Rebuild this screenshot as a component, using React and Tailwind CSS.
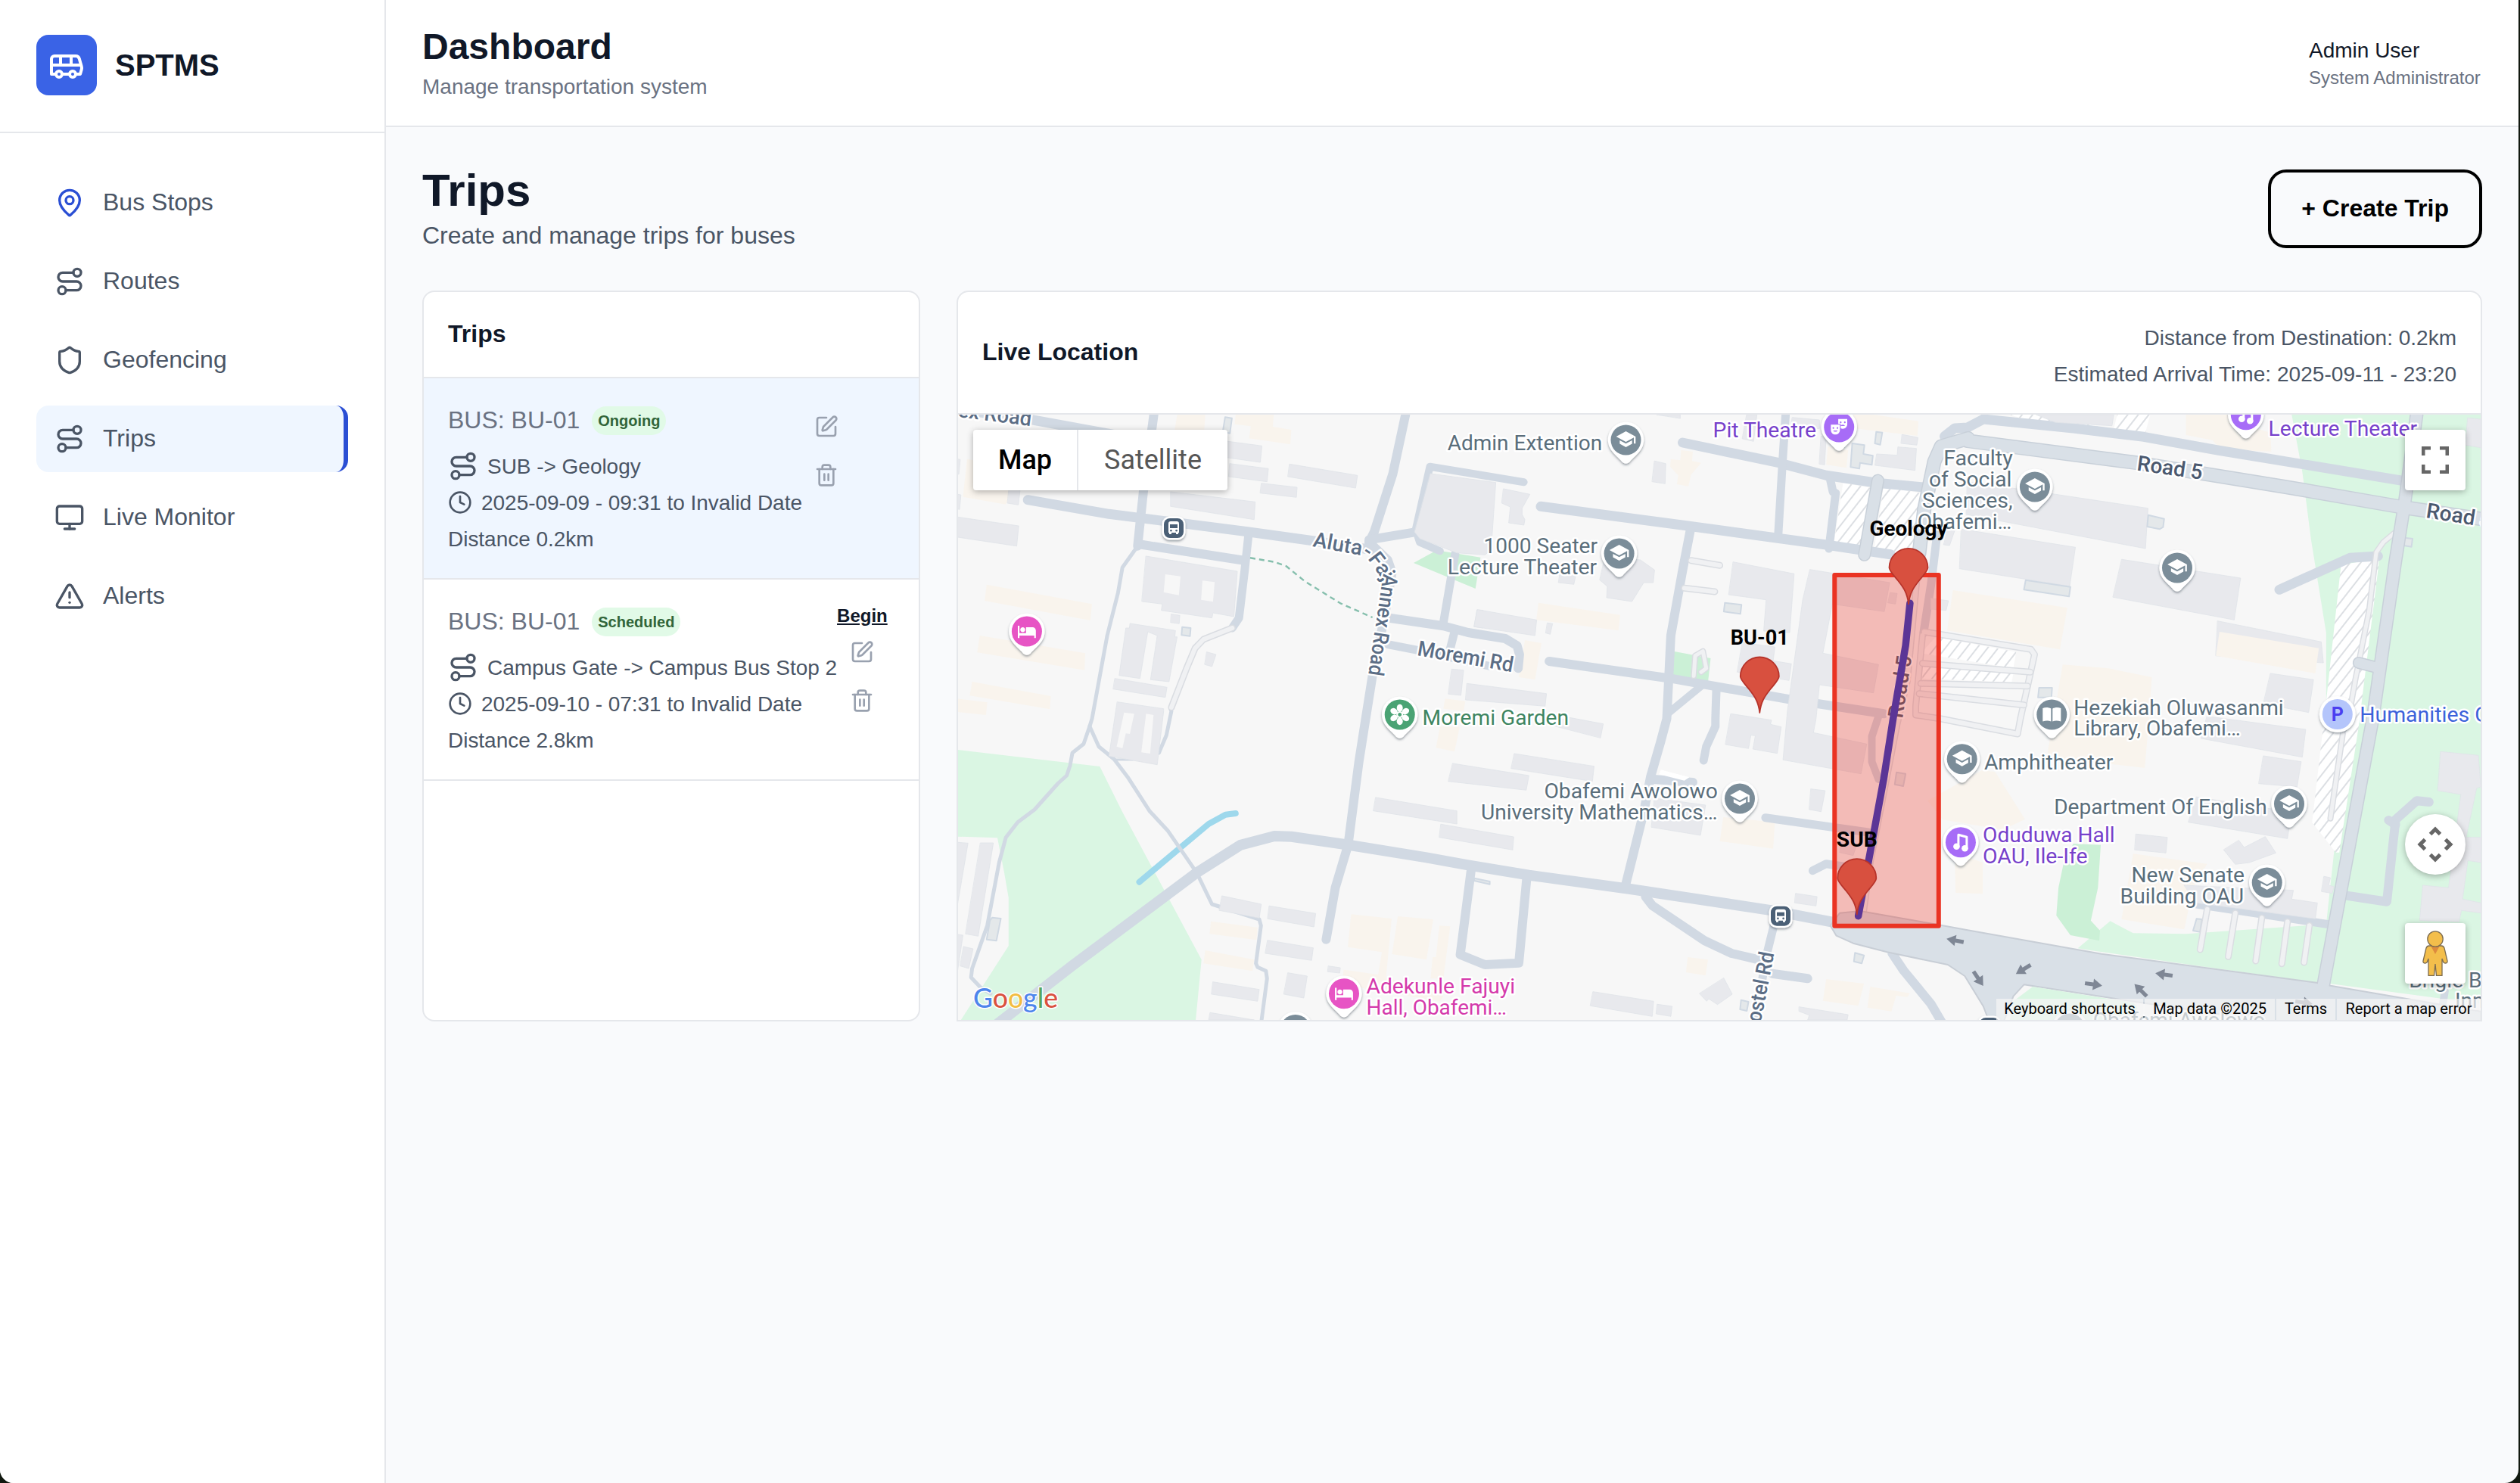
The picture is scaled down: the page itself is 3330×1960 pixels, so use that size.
import React from "react";
import { Bus, MapPin, Route, Shield, Monitor, TriangleAlert, Clock, SquarePen, Trash2 } from "lucide-react";
import { MdSchool, MdHotel, MdTheaterComedy } from "react-icons/md";

/* ---------- map geometry ---------- */

// The map sheet is digitised in six tiles; each has its own origin and scale.
const TILES = {
  A: [1260, 540, 2.24, 3],
  B: [1260, 940, 2.24, 3],
  C: [1940, 540, 2.24, 3],
  D: [1940, 940, 2.24, 3],
  E: [2600, 540, 2.148, 3],
  F: [2600, 940, 2.148, 3],
};

function trace(spec, close) {
  let t = TILES.A;
  const pts = spec.trim().split(/\s+/).map((tok) => {
    let s = tok;
    if (TILES[s[0]]) {
      t = TILES[s[0]];
      s = s.slice(1);
    }
    const [x, y] = s.split(",").map(Number);
    return (t[0] + x / t[2]).toFixed(1) + " " + (t[1] + y / t[3]).toFixed(1);
  });
  return "M" + pts.join("L") + (close ? "Z" : "");
}

const GREEN = [
  "B12,153 433,219 500,400 734,985 717,1224 22,1224 163,930 163,740 150,640 130,502 12,497",
  "E920,24 950,250 975,520 1018,890 1018,1150 F1040,560 1000,1075 1457,1160 E1457,24",
  "F313,940 405,832 470,880 620,883 960,850 1030,855 1000,1078 680,1015 360,950",
];
const GREEN_LOW = ["F130,1150 185,1092 470,1155 480,1170 490,1224 120,1224"];
const GREEN_DARK = [
  "F300,525 378,530 370,700 350,830 376,870 374,910 292,888 252,810 258,700 273,600",
  "A1362,612 1430,562 1560,590 1545,714",
  "C608,962 718,990 710,1085 600,1055",
];
const BEIGE = [
  "A662,24 745,24 742,84 655,84",
  "A835,24 948,24 945,72 1000,84 997,142 875,118 880,70 832,62",
  "A98,698 410,775 405,840 92,762",
  "A78,900 390,970 388,1037 70,967",
  "A55,1083 288,1140 285,1192 48,1138",
  "A12,1150 100,1165 96,1215 12,1203",
  "A40,200 200,240 155,380 28,350",
  "A1455,1150 1515,1160 1510,1200 1450,1190",
  "B1177,805 1297,822 1280,1060 1255,1060 1268,955 1167,935",
  "B1315,813 1420,825 1400,985 1298,963",
  "B1438,850 1470,853 1450,1060 1412,1060 1418,975 1428,975",
  "B762,833 900,857 897,907 758,883",
  "B745,948 890,985 885,1030 740,1000",
  "B1440,60 1498,62 1483,160 1428,145",
  "B1155,1025 1260,1045 1450,1130 1440,1150 1220,1100 1150,1080",
  "C630,165 665,170 663,208 690,215 660,262 652,308 618,300 622,265 598,230 600,200 628,205",
  "C208,770 450,818 445,880 202,838",
  "C168,918 217,930 198,1075 150,1065",
  "C1435,720 E283,790 262,955 C1418,880",
  "C1065,150 1125,165 1120,235 1060,222",
  "C1140,24 1200,24 1333,50 1330,108 1140,78",
  "D755,420 908,440 903,545 745,515",
  "D650,975 710,985 703,1048 645,1035",
  "D1060,1062 1172,1080 1155,1168 1050,1148",
  "D1190,1092 1307,1118 1300,1133 1267,1128 1253,1190 1182,1175",
  "D1360,355 1520,235 F78,240 163,428 100,470 D1405,430",
  "D1440,560 F43,600 43,724 D1443,720",
  "E270,1015 400,1030 523,1065 515,1230 F503,225 225,180 240,60",
  "E620,24 760,24 770,60 860,95 862,170 760,165 720,162 695,125 620,105",
  "F470,565 680,605 640,700 615,865 437,825",
];
const BUILDINGS = [
  "A643,330 893,370 890,440 643,388",
  "A812,130 913,148 908,213 812,195",
  "A818,218 932,238 928,290 815,270",
  "A912,296 1017,312 1015,352 908,335",
  "A995,220 1196,265 1190,315 990,270",
  "A12,430 193,465 187,545 12,510",
  "A165,310 197,325 192,382 160,375",
  "A12,200 20,202 16,260 12,260",
  "A12,340 22,342 18,400 12,398",
  "A570,585 840,645 830,825 768,810 765,830 615,800 618,775 558,765",
  "A523,852 657,880 655,905 662,905 638,1083 583,1075 603,900 575,885 552,1070 490,1058 510,870 520,870",
  "A478,1070 632,1105 627,1145 473,1112",
  "A485,1163 622,1190 B622,0 603,212 460,178 480,0",
  "A750,965 777,975 765,1023 744,1015",
  "A645,815 670,820 668,853 643,848",
  "A1412,258 C82,293 68,560 50,580 A1490,572 1380,515 1365,490",
  "A1475,1033 1510,1037 1502,1137 1465,1132",
  "A1520,1090 C232,1130 228,1180 A1516,1155",
  "A1550,798 1568,800 1568,870 1542,865",
  "B1250,342 1490,395 1490,447 1243,395",
  "B1443,448 D135,498 132,550 B1438,500",
  "B1478,207 D180,255 172,313 B1465,278",
  "B795,732 911,765 905,820 787,790",
  "B935,772 1072,802 1067,855 930,823",
  "B930,908 1065,938 1060,988 923,960",
  "B768,1073 905,1103 900,1150 764,1122",
  "B760,1195 890,1224 756,1224",
  "B990,1037 1047,1050 1037,1137 978,1122",
  "B1110,1010 1145,1017 1143,1038 1108,1033",
  "B12,520 43,523 12,765",
  "B80,522 118,522 73,892 36,883",
  "B12,885 28,888 12,1030",
  "B30,933 58,942 45,1020 20,1010",
  "C105,318 183,340 160,395 160,420 168,440 165,462 120,453 125,390 100,375",
  "C552,208 585,218 583,298 545,290",
  "C785,608 965,655 952,888 875,882 882,758 772,738",
  "C1012,638 1248,690 1232,805 1078,775 1050,970 1215,1015 1200,1127 1040,1095 1030,1230 D1022,85 1180,130 1163,248 932,193 945,0 C990,760",
  "C405,590 510,600 552,640 548,690 520,690 485,765 410,750 412,705 390,680",
  "C28,797 203,838 198,900 18,865",
  "C235,850 250,853 243,895 230,890",
  "C272,655 318,665 313,697 268,690",
  "C812,928 908,945 903,1000 957,1012 950,1078 797,1045",
  "C1210,180 1270,185 1272,152 1327,158 1323,245 1205,225",
  "C1285,103 1332,115 1328,145 1282,138",
  "C1045,110 1060,112 1055,223 1040,220",
  "C960,35 1040,45 1040,80 955,70",
  "C825,24 855,24 845,130 812,120",
  "C558,24 628,24 628,38",
  "C1420,480 1440,485 1425,543 1408,540",
  "C1460,478 E306,550 290,704 C1455,635",
  "C1478,290 E250,340 512,395 505,555 C1475,420",
  "C1370,752 1422,762 1415,800 1370,795",
  "C1250,730 1270,733 1265,775 1243,770",
  "D232,50 300,25 400,50 392,105",
  "D137,168 373,218 368,278 128,227",
  "D552,345 703,372 688,492 543,460",
  "D778,10 898,35 895,52 927,62 915,167 843,150 850,97 837,95 830,148 762,132",
  "D1015,308 1057,315 1045,398 1010,390",
  "D970,722 1033,735 1030,772 967,760",
  "D370,1112 549,1150 545,1210 362,1168",
  "D560,1162 604,1170 600,1210 557,1200",
  "D757,1058 782,1122 738,1163 712,1140 706,1150 685,1120",
  "D980,1172 1125,1203 1122,1224 1005,1224 1010,1205 980,1190",
  "D1105,520 1150,530 1140,572 1100,560",
  "E438,598 775,672 757,838 413,748",
  "E710,842 1004,925 1010,1008 705,980",
  "E860,1050 982,1075 968,1205 840,1170",
  "E1420,37 1457,42 1457,155 1413,145",
  "E195,24 415,24 410,68 250,55",
  "F680,20 960,72 950,182 663,108",
  "F840,177 947,200 935,300 827,287",
  "F650,340 920,400 908,505 627,440",
  "F478,487 567,500 563,562 475,550",
  "F770,512 785,540 845,497 875,562 800,600 760,607 727,550",
  "F615,690 925,710 920,745 993,760 987,823 650,760",
  "F1012,655 1030,660 1025,690 1040,695 1035,722 1005,715",
  "F1343,160 1450,175 1457,300 1445,305 1415,500 1457,500 1457,600 1420,592 1405,745 1457,760 1457,800 1402,790 1395,835 1283,830 1292,690 1365,700 1400,330 1335,315",
];
const COURTYARDS = [
  "A627,657 672,665 667,740 622,728",
  "A737,682 773,688 768,766 733,758",
  "B505,5 535,10 522,90 510,88 500,147 483,140",
  "B570,10 592,15 582,168 556,163",
];
const OUTLINED = [
  "A677,866 702,870 700,902 675,898",
  "A804,34 824,38 818,98 797,92",
  "B115,818 140,822 127,910 98,905 108,830",
  "C1208,92 1226,95 1220,143 1204,138",
  "C1137,138 1173,145 1170,180 1198,187 1195,223 1160,215 1158,238 1132,232",
  "C760,770 809,778 806,814 757,805",
  "D808,1145 830,1152 825,1188 805,1182",
  "D1145,958 1172,968 1165,1000 1142,992",
  "D1268,242 1295,248 1288,297 1263,290",
  "D18,662 64,675 64,686 18,672",
  "E513,422 558,437 555,470 545,478 510,468",
  "E165,680 292,707 288,745 160,718",
  "E203,1107 240,1107 238,1145 200,1145",
  "E1240,512 1263,516 1260,548 1236,542",
  "F650,823 665,825 660,875 640,870",
];
const PARKING = [
  "C1110,295 1195,315 1160,560 1082,543",
  "C1230,310 1340,335 1320,585 1200,575",
  "E1060,620 1140,600 1170,560 1165,640 F1110,60 1055,560 1045,560 978,440 E1018,1160",
  "C1385,905 E138,965 130,1030 C1340,970",
  "C1345,1010 E130,1050 125,1085 C1345,1070",
  "E425,24 518,24 505,95 415,80",
  "E120,24 250,24 380,75 200,60",
];
const ROADS = [
  ["A593,24 562,330 545,545", 12],
  ["A0,0 235,45 480,105", 13],
  ["A220,362 460,418 870,488 1068,525 1240,560", 13],
  ["A1338,24 1300,260 1245,490 1230,530", 12],
  ["A1230,530 1285,600 1298,650 1275,830 1240,1060 1220,1230 B1200,200 1168,530 1130,700 1103,905", 12],
  ["A1230,520 1365,490", 12],
  ["A550,538 860,602", 12],
  ["A874,490 862,640 845,830 825,870", 11],
  ["A545,545 500,630 487,730 455,900 410,1230 B403,60 385,130 352,165 345,215 335,255 310,285 240,390 190,440 155,500 135,600 100,850 55,1020 52,1055 80,1095 110,1120", 5],
  ["B403,60 430,140 475,190 515,260 580,395 635,475 720,640 765,765 905,825 910,850 895,1000 900,1015 925,1030 928,1060 912,1224", 5],
  ["A642,1190 B645,0 630,95 608,165", 5],
  ["B475,192 530,192", 3],
  ["B130,1240 350,1010 720,640 850,530 950,495 1000,497 1170,530 1400,580 D0,610 180,650 480,705 900,790 1075,835", 14],
  ["B1533,620 1500,965 D50,1005 150,998 174,655", 12],
  ["A1440,565 1380,530 1368,480 1410,230 C0,255 165,292", 10],
  ["A1485,575 1450,850", 11],
  ["A1290,830 1450,862 C0,888 110,912 145,940 152,975 148,1030", 12],
  ["A1482,890 1465,980", 11],
  ["A1285,935 1400,965 C60,1020", 11],
  ["C635,135 920,215 1060,265 1210,295 1350,312", 13],
  ["C940,24 930,225 918,500", 11],
  ["C1070,270 1080,330 1088,335 1068,555", 11],
  ["C215,388 650,465 1060,540 1250,578", 13],
  ["C658,480 635,640 600,900 588,1230 D570,120 540,260 520,400 465,695", 12],
  ["C240,1002 600,1070 960,1155 1230,1210", 12],
  ["C690,1100 590,1210", 10],
  ["C735,1110 732,1230 D732,60 705,140 697,195", 11],
  ["C1390,480 1370,700 1348,890", 11],
  ["C1410,110 1440,78 E0,75 45,42 300,78 500,112 710,165 1230,285", 13],
  ["D525,735 545,770 700,910 780,960 860,985", 12],
  ["D905,850 880,985 850,1240", 11],
  ["D900,1040 1005,1060", 12],
  ["D880,422 1185,480", 11],
  ["D1020,632 1060,605 1110,615", 11],
  ["D1215,20 1195,100 1195,200 1215,270", 10],
  ["D550,270 665,282", 12],
  ["D1255,960 1290,1030 1370,1160 1405,1240", 12],
  ["E885,718 1085,592 1165,585", 13],
  ["F1310,360 1275,355 1215,430 1190,755 1070,730", 12],
  ["F1195,432 1215,450", 12],
  ["F650,765 1025,845", 11],
  ["F1355,1110 1340,1240", 10],
];
const AVENUES = [
  ["C1335,575 1350,400 1380,210 1400,150 1480,118 E0,128 480,215 900,310 1230,390 1470,440", 17],
  ["C1213,285 1173,580", 15],
  ["E1275,20 1240,380 1215,600 1150,1230 F1010,1085", 16],
  ["E1110,1008 1170,1030", 14],
];
const AVENUE_AREA =
  "D1072,850 1100,800 1160,792 1390,846 F0,868 380,962 990,1076 1030,1088 1457,1190 1457,1240 900,1240 430,1142 160,1084 130,1130 100,1240 D1545,1240 1525,1170 1470,1050 1420,1005 1240,955 1140,920 1090,890";
const LANES = [
  ["A825,870 740,915 715,950 690,1030 645,1185", 9],
  ["C660,602 745,622", 9],
  ["C640,712 730,726", 9],
  ["C668,1060 672,980 695,962 705,1030 690,1045", 8],
  ["C1330,650 1300,1080 D1270,50 1190,600 1170,800", 9],
  ["C1350,885 E180,955 190,975 150,1230 F142,90 D1400,30 1325,15 C1325,1180 1345,900", 9],
  ["C1345,1010 E178,1045", 9],
  ["C1340,1090 E170,1100", 9],
  ["C1335,1130 E160,1175", 9],
  ["E1210,495 1180,530 1160,570 1140,800 1100,1080 1085,1200", 8],
  ["F1065,90 1030,425", 8],
  ["F680,785 660,945", 9],
  ["F760,800 740,973", 9],
  ["F835,820 818,990", 9],
  ["F908,835 892,1001", 9],
  ["F970,850 955,996", 9],
];

const ARROWS = [
  [2584, 1243, 191],
  [2614, 1293, 56],
  [2674, 1281, 148],
  [2766, 1301, 8],
  [2829, 1309, 225],
  [2860, 1288, 188],
  [3044, 1325, 8],
];

function Arrow({ x, y, a }) {
  return (
    <path
      d="M-11 -2.6H0V-7.5L12 0L0 7.5V2.6H-11Z"
      fill="#7f8795"
      transform={`translate(${x} ${y}) rotate(${a})`}
    />
  );
}

/* ---------- map symbols ---------- */

const PIN_COLORS = { school: "#7b8d99", book: "#7b8d99", bed: "#e754c4", mask: "#a76cf7", music: "#a76cf7", flower: "#4aa374" };

function PinGlyph({ kind }) {
  if (kind === "school") return <MdSchool x={-14} y={-15} size={28} color="#fff" />;
  if (kind === "bed") return <MdHotel x={-13} y={-13} size={26} color="#fff" />;
  if (kind === "mask") return <MdTheaterComedy x={-13} y={-14} size={26} color="#fff" />;
  if (kind === "book")
    return (
      <g fill="#fff">
        <path d="M-12 -8.5C-8 -10 -4 -9.5 -1 -8V9C-4 7.5 -8 7.5 -12 9Z" />
        <path d="M12 -8.5C8 -10 4 -9.5 1 -8V9C4 7.5 8 7.5 12 9Z" />
      </g>
    );
  if (kind === "music")
    return (
      <g>
        <path d="M-3 6V-10L8 -7V8" fill="none" stroke="#fff" strokeWidth="3" />
        <circle cx="-5.5" cy="5.5" r="4.3" fill="#fff" />
        <circle cx="5.5" cy="8" r="4.3" fill="#fff" />
      </g>
    );
  return (
    <g>
      {[0, 60, 120, 180, 240, 300].map((r) => (
        <ellipse key={r} cx="0" cy="-8.800" rx="4" ry="5" fill="#fff" transform={`rotate(${r})`} />
      ))}
      <circle r="4.500" fill="#fff" />
      <circle r="2.400" fill="#4aa374" />
    </g>
  );
}

function PoiPin({ x, y, kind }) {
  return (
    <g transform={`translate(${x} ${y})`}>
      <path
        d="M0 -23.8A23.6 23.6 0 0 1 19.8 12.8C15 20 9.5 23.5 4.8 29.2Q0 33.5 -4.8 29.2C-9.5 23.5 -15 20 -19.8 12.8A23.6 23.6 0 0 1 0 -23.8Z"
        fill="#fff"
        filter="url(#pinShadow)"
      />
      <circle r="20" fill={PIN_COLORS[kind]} />
      <PinGlyph kind={kind} />
    </g>
  );
}

const PINS = [
  [2148.5, 581, "school"],
  [2139.6, 731, "school"],
  [2430.2, 564, "mask"],
  [2688.9, 643, "school"],
  [2877, 750, "school"],
  [2967.8, 547.7, "music"],
  [2711.3, 944, "book"],
  [2592.7, 1002.7, "school"],
  [3025, 1062, "school"],
  [2995.7, 1166, "school"],
  [2590.9, 1112.7, "music"],
  [2299, 1055, "school"],
  [1356.9, 834, "bed"],
  [1776, 1312.7, "bed"],
  [1849.7, 944, "flower"],
  [1711.8, 1360.5, "school"],
  [2735, 1359, "school"],
];

function TransitStop({ x, y }) {
  return (
    <g transform={`translate(${x} ${y})`}>
      <rect x="-15.5" y="-15.5" width="31" height="31" rx="10" fill="#fff" filter="url(#pinShadow)" />
      <rect x="-13" y="-13" width="26" height="26" rx="8" fill="#4b6076" />
      <path d="M-7 -6Q-7 -9 -4 -9H4Q7 -9 7 -6V6H6V8H3V6H-3V8H-6V6H-7Z" fill="#fff" />
      <rect x="-5" y="-5" width="10" height="5" fill="#4b6076" />
      <circle cx="-3.6" cy="3.2" r="1.3" fill="#4b6076" />
      <circle cx="3.6" cy="3.2" r="1.3" fill="#4b6076" />
    </g>
  );
}

// [text, x, baseline, rendered width, colour]
const SLATE = "#5a6e7b";
const VIOLET = "#7741cb";
const LABELS = [
  ["Admin Extention", 1914.5, 594.3, 202, SLATE],
  ["1000 Seater", 1962.3, 730.3, 148, SLATE],
  ["Lecture Theater", 1914.5, 758.3, 195, SLATE],
  ["Pit Theatre", 2265.4, 577.7, 134, VIOLET],
  ["Faculty", 2570, 614.3, 89, SLATE],
  ["of Social", 2550.7, 642.3, 107, SLATE],
  ["Sciences,", 2541.8, 670.3, 117, SLATE],
  ["Obafemi…", 2535.5, 698.3, 122, SLATE],
  ["Lecture Theater", 2999.4, 575.7, 194, VIOLET],
  ["Hezekiah Oluwasanmi", 2742, 944.3, 275, SLATE],
  ["Library, Obafemi…", 2742, 972, 218, SLATE],
  ["Humanities C", 3120, 953.3, 168, "#3c62da"],
  ["Amphitheater", 2623.7, 1017, 168, SLATE],
  ["Department Of English", 2716, 1075.7, 279, SLATE],
  ["Oduduwa Hall", 2621.9, 1112.7, 172, VIOLET],
  ["OAU, Ile-Ife", 2621.9, 1140.7, 136, VIOLET],
  ["New Senate", 2818.3, 1165.7, 147, SLATE],
  ["Building OAU", 2803.4, 1194, 161, SLATE],
  ["Moremi Garden", 1881.4, 957.3, 191, "#3e8561"],
  ["Obafemi Awolowo", 2042.2, 1055, 227, SLATE],
  ["University Mathematics…", 1958.8, 1083, 310, SLATE],
  ["Adekunle Fajuyi", 1807.3, 1312.3, 194, "#d43aab"],
  ["Hall, Obafemi…", 1807.3, 1340.3, 183, "#d43aab"],
  ["Brigle B", 3185, 1304.7, 94, SLATE],
  ["Inn", 3245.7, 1331.7, 36, SLATE],
  ["Obafemi Awolowo", 2767.6, 1358, 225, SLATE],
];

// [text, x, baseline, rotation, width, anchor, colour]
const ROAD_LABELS = [
  ["nnex Road", 1362, 563, 7, 128, "end", "#5b6d85"],
  ["Moremi Rd", 1872, 866, 10, 128, "start", "#5b6d85"],
  ["Road 5", 2823, 621.5, 8, 87, "start", "#4b596f"],
  ["Road 5", 3205, 684, 9, 88, "start", "#4b596f"],
  ["Road 5", 2514, 950, -81.5, 83, "start", "#4b596f"],
  ["Hostel Rd", 2344.5, 1260, -79, 112, "end", "#5b6d85"],
];

function Marker({ x, y, label, w }) {
  return (
    <g transform={`translate(${x} ${y})`}>
      <path
        d="M0 0C-1.5 -14 -6 -21 -14 -31C-21 -39.500 -25.500 -44 -25.500 -48A25.500 25.500 0 0 1 25.500 -48C25.500 -44 21 -39.500 14 -31C6 -21 1.500 -14 0 0Z"
        fill="#d8503f"
        stroke="#b7342b"
        strokeWidth="1.8"
        strokeLinejoin="round"
      />
      <text y="-90" textAnchor="middle" fontSize="28" fontWeight="700" fill="#000" textLength={w} lengthAdjust="spacingAndGlyphs">
        {label}
      </text>
    </g>
  );
}

function MapCanvas() {
  return (
    <svg
      viewBox="1266 548 2012 800"
      className="block h-[800px] w-[2012px] font-['Roboto',sans-serif]"
      strokeLinejoin="round"
      strokeLinecap="round"
      aria-hidden="true"
    >
      <defs>
        <pattern id="hatch" width="11" height="11" patternUnits="userSpaceOnUse" patternTransform="rotate(38)">
          <rect width="11" height="11" fill="#fff" />
          <rect width="2" height="11" fill="#dcdfe3" />
        </pattern>
        <filter id="pinShadow" x="-30%" y="-30%" width="160%" height="170%">
          <feDropShadow dx="0" dy="2" stdDeviation="1.6" floodColor="#3b4a55" floodOpacity="0.5" />
        </filter>
      </defs>
      <rect x="1266" y="548" width="2012" height="800" fill="#f7f7f7" />
      {GREEN.map((d) => <path key={d} d={trace(d, true)} fill="#daf6e3" />)}
      {GREEN_DARK.map((d) => <path key={d} d={trace(d, true)} fill="#cbf0d6" />)}
      <path d={trace("B550,677 755,447 805,410 835,405")} fill="none" stroke="#9ed8ec" strokeWidth="8" />
      {BEIGE.map((d) => <path key={d} d={trace(d, true)} fill="#f9f4ed" />)}
      {PARKING.map((d) => <path key={d} d={trace(d, true)} fill="url(#hatch)" />)}
      {ROADS.map(([d, w]) => <path key={d} d={trace(d)} fill="none" stroke="#d1d9e3" strokeWidth={w} />)}
      {BUILDINGS.map((d) => <path key={d} d={trace(d, true)} fill="#e8e9ed" stroke="#e0e3e9" strokeWidth="0.8" />)}
      <path d={trace("E715,885 997,950 987,1050 705,980", true)} fill="#f9f4ed" />
      {COURTYARDS.map((d) => <path key={d} d={trace(d, true)} fill="#f7f7f7" />)}
      {OUTLINED.map((d) => <path key={d} d={trace(d, true)} fill="#e4e8ea" stroke="#d0d9e3" strokeWidth="2" />)}
      <path d={trace("D570,232 655,262 640,275 565,250", true)} fill="#fff" />
      {LANES.map(([d, w]) => (
        <g key={d} fill="none">
          <path d={trace(d)} stroke="#dadde2" strokeWidth={w} />
          <path d={trace(d)} stroke="#f0f1f3" strokeWidth={w - 3} />
        </g>
      ))}
      {AVENUES.map(([d, w]) => <path key={d} d={trace(d)} fill="none" stroke="#c8d0d9" strokeWidth={w + 2} />)}
      <path d={trace(AVENUE_AREA, true)} fill="#d9e0e7" stroke="#c8ced6" strokeWidth="2" />
      {AVENUES.map(([d, w]) => <path key={d} d={trace(d)} fill="none" stroke="#d9e0e7" strokeWidth={w - 1} />)}
      {GREEN_LOW.map((d) => <path key={d} d={trace(d, true)} fill="#daf6e3" />)}
      <path
        d={trace("A878,592 950,608 985,625 1040,685 1145,772 1240,828")}
        fill="none"
        stroke="#86bfad"
        strokeWidth="2.4"
        strokeDasharray="7 5"
        strokeLinecap="butt"
      />
      {ARROWS.map(([x, y, a]) => <Arrow key={x} x={x} y={y} a={a} />)}

      <g fontSize="28" fontWeight="500" stroke="#fff" strokeWidth="5" paintOrder="stroke">
        {ROAD_LABELS.map(([t, x, y, a, w, anchor, c]) => (
          <text
            key={t + x}
            transform={`translate(${x} ${y}) rotate(${a})`}
            textAnchor={anchor}
            textLength={w}
            lengthAdjust="spacingAndGlyphs"
            fill={c}
          >
            {t}
          </text>
        ))}
        <path id="alutaCurve" d="M1734 722L1799 734Q1806 737 1812 745L1840 785" fill="none" stroke="none" />
        <text fill="#5b6d85">
          <textPath href="#alutaCurve">Aluta-Faj</textPath>
        </text>
        <text transform="translate(1828 758) rotate(98.500)" fill="#5b6d85" textLength="135" lengthAdjust="spacingAndGlyphs">
          Annex Road
        </text>
      </g>

      {PINS.map(([x, y, k]) => <PoiPin key={x} x={x} y={y + 0.5} kind={k} />)}
      <g transform="translate(3088.800 944)">
        <circle r="24" fill="#fff" filter="url(#pinShadow)" />
        <circle r="20" fill="#b4c5fb" />
        <text textAnchor="middle" y="9" fontSize="25" fontWeight="700" fill="#4b3ff0">P</text>
      </g>
      <TransitStop x={1551} y={698} />
      <TransitStop x={2353} y={1210.7} />
      <TransitStop x={2629} y={1358} />

      <g fontSize="28" stroke="#fff" strokeWidth="5" paintOrder="stroke">
        {LABELS.map(([t, x, y, w, c]) => (
          <text key={t + y} x={x - 1.8} y={y + 0.4} fill={c} textLength={w + 2.5} lengthAdjust="spacingAndGlyphs">
            {t}
          </text>
        ))}
      </g>

      <rect x="2424.300" y="760" width="137.500" height="463.700" fill="#ea3323" fillOpacity="0.3" stroke="#ea3323" strokeWidth="6" />
      <path
        d={trace("C1308,772 1295,940 1258,1230 D1230,270 1190,560 1155,812")}
        fill="none"
        stroke="#5b3596"
        strokeWidth="9.500"
      />
      <Marker x={2522} y={798.3} label="Geology" w={103} />
      <Marker x={2325.3} y={942} label="BU-01" w={77} />
      <Marker x={2453.800} y={1208.700} label="SUB" w={54} />

      <g fontSize="37" fontWeight="500" stroke="#fff" strokeWidth="3" paintOrder="stroke">
        <text x="1286" y="1332" textLength="112" lengthAdjust="spacingAndGlyphs" className="font-['Lato',sans-serif]">
          <tspan fill="#4e86ec">G</tspan>
          <tspan fill="#d9523f">o</tspan>
          <tspan fill="#f2bd42">o</tspan>
          <tspan fill="#4e86ec">g</tspan>
          <tspan fill="#58a65c">l</tspan>
          <tspan fill="#d9523f">e</tspan>
        </text>
      </g>
    </svg>
  );
}

/* ---------- map controls ---------- */

function MapTypeControl() {
  return (
    <div className="absolute left-5 top-5 flex h-20 rounded-sm bg-white font-['Roboto',sans-serif] text-4xl leading-[81px] shadow-[0_2px_8px_rgba(0,0,0,0.3)]">
      <button className="w-[139px] border-r-2 border-gray-200 font-medium text-black">Map</button>
      <button className="w-[197px] text-[#565656]">Satellite</button>
    </div>
  );
}

function SideControls() {
  const box = "absolute right-5 flex h-20 w-20 items-center justify-center bg-white shadow-[0_2px_8px_rgba(0,0,0,0.3)]";
  return (
    <>
      <button className={`${box} top-5 rounded-sm`} aria-label="Toggle fullscreen view">
        <svg viewBox="0 0 36 36" className="h-9 w-9" fill="none" stroke="#666" strokeWidth="4.500">
          <path d="M2.250 12V2.250H12M24 2.250H33.750V12M33.750 24V33.750H24M12 33.750H2.250V24" />
        </svg>
      </button>
      <button className={`${box} top-[528px] rounded-full`} aria-label="Map camera controls">
        <svg viewBox="-24 -24 48 48" className="h-12 w-12" fill="none" stroke="#666" strokeWidth="5">
          {[0, 90, 180, 270].map((r) => (
            <path key={r} d="M-6.500 -13.500L0 -20L6.500 -13.500" transform={`rotate(${r})`} />
          ))}
        </svg>
      </button>
      <button className={`${box} top-[672px] rounded-sm`} aria-label="Street View Pegman">
        <svg viewBox="0 0 34 60" className="h-[60px] w-[34px]" stroke="#7c6c50" strokeWidth="1.300">
          <path
            d="M9 20H25Q28 20 29 23L33 40Q33.500 43 30 43L28 42L26 37V59.300H18.500L17 44L15.500 59.300H8V37L6 42L4 43Q.5 43 1 40L5 23Q6 20 9 20Z"
            fill="#f3be4b"
          />
          <path d="M11 20H23L17 31Z" fill="#dd8b3e" stroke="none" />
          <circle cx="17" cy="11" r="10.200" fill="#f3be4b" />
        </svg>
      </button>
    </>
  );
}

function Attribution() {
  const cell = "bg-[#f5f5f5]/70 text-center";
  return (
    <div className="absolute bottom-0 right-0 flex h-7 gap-0.5 whitespace-nowrap font-['Roboto',sans-serif] text-xl leading-[27px] text-black">
      <span className={`${cell} w-[194px]`}>Keyboard shortcuts</span>
      <span className={`${cell} w-[172px]`}>Map data ©2025</span>
      <span className={`${cell} w-[78px]`}>Terms</span>
      <span className={`${cell} w-[190px]`}>Report a map error</span>
    </div>
  );
}

/* ---------- application shell ---------- */

const NAV = [
  { label: "Bus Stops", Icon: MapPin, tint: "text-[#2b4fd4]" },
  { label: "Routes", Icon: Route },
  { label: "Geofencing", Icon: Shield },
  { label: "Trips", Icon: Route, active: true },
  { label: "Live Monitor", Icon: Monitor },
  { label: "Alerts", Icon: TriangleAlert },
];

function Sidebar() {
  return (
    <aside className="w-[510px] shrink-0 border-r-2 border-gray-200 bg-white">
      <div className="flex h-44 items-center gap-6 border-b-2 border-gray-200 px-12 pb-0.5">
        <div className="flex h-20 w-20 items-center justify-center rounded-2xl bg-[#3a63e6]">
          <Bus size={48} color="#fff" />
        </div>
        <span className="text-[40px] font-bold leading-[56px] text-gray-900">SPTMS</span>
      </div>
      <nav className="flex flex-col gap-4 p-12">
        {NAV.map(({ label, Icon, tint, active }) => (
          <a
            key={label}
            className={
              "flex h-[88px] items-center gap-6 rounded-2xl px-6 text-[32px] text-gray-600 " +
              (active ? "border-r-[6px] border-[#2b4fd4] bg-[#eff6ff]" : "")
            }
          >
            <Icon size={40} className={tint} />
            <span className="pb-0.5">{label}</span>
          </a>
        ))}
      </nav>
    </aside>
  );
}

function TopBar() {
  return (
    <header className="flex h-[168px] items-center justify-between border-b-2 border-gray-200 bg-white px-12">
      <div>
        <h2 className="text-5xl font-bold leading-[62px] pb-0.5 text-gray-900">Dashboard</h2>
        <p className="text-[28px] leading-10 text-gray-500">Manage transportation system</p>
      </div>
      <div className="w-[229px] whitespace-nowrap">
        <p className="text-[28px] leading-10 text-gray-900">Admin User</p>
        <p className="text-2xl leading-8 text-gray-500">System Administrator</p>
      </div>
    </header>
  );
}

function TripRow({ status, route, time, distance, active, canBegin }) {
  return (
    <div className={"flex border-b-2 border-gray-200 p-8 " + (active ? "bg-[#eff6ff]" : "")}>
      <div>
        <div className="flex items-center gap-4">
          <span className="pb-0.5 text-[32px] leading-[46px] text-gray-500">BUS: BU-01</span>
          <span className="rounded-full bg-[#e1fae7] px-2 py-1 text-xl font-bold leading-[30px] text-[#316539]">{status}</span>
        </div>
        <div className="mt-4 flex flex-col gap-2 whitespace-nowrap text-[28px] leading-[38px] tracking-[-0.03px] text-gray-600">
          <div className="flex items-center gap-3">
            <Route size={40} />
            <span className="pt-0.5">{route}</span>
          </div>
          <div className="flex items-center gap-3">
            <Clock size={32} />
            <span className="pt-0.5">{time}</span>
          </div>
          <div className="pt-0.5">{distance}</div>
        </div>
      </div>
      <div className="flex flex-col items-center text-gray-400">
        {canBegin && <button className="text-2xl font-bold leading-8 text-gray-900 underline">Begin</button>}
        <button className="p-4"><SquarePen size={32} /></button>
        <button className="p-4"><Trash2 size={32} /></button>
      </div>
    </div>
  );
}

function TripsCard() {
  return (
    <section className="w-[658px] shrink-0 overflow-hidden rounded-2xl border-2 border-gray-200 bg-white">
      <h3 className="border-b-2 border-gray-200 px-8 pb-[34px] pt-8 text-[32px] font-bold leading-[46px] text-gray-900">Trips</h3>
      <TripRow active status="Ongoing" route="SUB -> Geology" time="2025-09-09 - 09:31 to Invalid Date" distance="Distance 0.2km" />
      <TripRow
        canBegin
        status="Scheduled"
        route="Campus Gate -> Campus Bus Stop 2"
        time="2025-09-10 - 07:31 to Invalid Date"
        distance="Distance 2.8km"
      />
    </section>
  );
}

function LiveLocationCard() {
  return (
    <section className="w-[2016px] shrink-0 rounded-t-2xl border-2 border-gray-200 bg-white">
      <div className="flex h-[162px] items-center justify-between border-b-2 border-gray-200 px-8">
        <h3 className="pb-0.5 text-[32px] font-bold text-gray-900">Live Location</h3>
        <div className="flex flex-col gap-2 pt-[9px] text-right text-[28px] leading-10 text-gray-600">
          <p>Distance from Destination: 0.2km</p>
          <p className="tracking-[0.05px]">Estimated Arrival Time: 2025-09-11 - 23:20</p>
        </div>
      </div>
      <div className="relative h-[800px] overflow-hidden">
        <MapCanvas />
        <MapTypeControl />
        <SideControls />
        <Attribution />
      </div>
    </section>
  );
}

export default function App() {
  return (
    <div className="h-[1960px] w-[3330px] bg-[#11180f] font-['Liberation_Sans',Arial,sans-serif]">
      <div className="flex h-full w-[3328px] overflow-hidden rounded-b-[18px] bg-[#f9fafc]">
        <Sidebar />
        <div className="min-w-0 flex-1">
          <TopBar />
          <main className="p-12">
            <div className="mb-12 flex items-start justify-between">
              <div>
                <h1 className="text-6xl font-bold leading-[72px] text-gray-900">Trips</h1>
                <p className="pb-0.5 text-[32px] leading-[46px] text-gray-600">Create and manage trips for buses</p>
              </div>
              <button className="mt-2 h-[104px] rounded-3xl border-4 border-black px-10 pb-0.5 text-[32px] font-bold text-black">
                + Create Trip
              </button>
            </div>
            <div className="flex gap-12">
              <TripsCard />
              <LiveLocationCard />
            </div>
          </main>
        </div>
      </div>
    </div>
  );
}
